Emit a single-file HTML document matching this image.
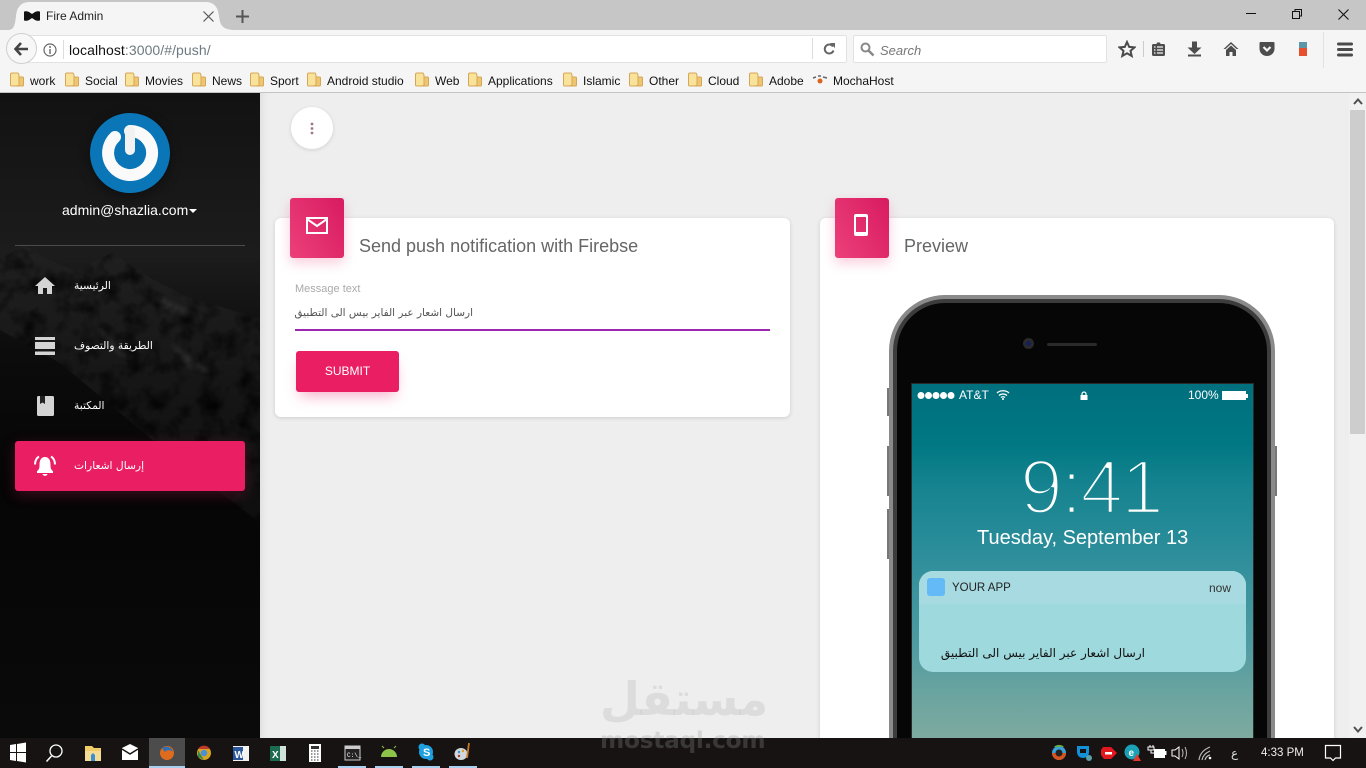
<!DOCTYPE html>
<html><head><meta charset="utf-8"><title>Fire Admin</title>
<style>
html,body{margin:0;padding:0;width:1366px;height:768px;overflow:hidden;background:#eee;font-family:"Liberation Sans","DejaVu Sans",sans-serif}
.a{position:absolute}
.t{position:absolute;white-space:nowrap}
.bm{position:absolute;top:74px;font-size:12px;line-height:14px;color:#111;white-space:nowrap}
.f{position:absolute;top:72px;width:14px;height:15px}
.nav{position:absolute;left:74px;color:#fff;font:10.7px "DejaVu Sans",sans-serif;white-space:nowrap;direction:rtl}
</style></head>
<body>
<svg width="0" height="0" style="position:absolute"><defs>
<g id="fold"><path d="M.5 2.500Q.5 1 2 1H8L9 3V14H2Q.5 14 .5 13Z" fill="#f9e39a" stroke="#d6a658"/><path d="M9 5H12.500Q13.500 5 13.500 6V13Q13.500 14 12.500 14H5Q8.500 14 9 13Z" fill="#eec66f" stroke="#d6a658"/></g>
</defs></svg>

<!-- browser chrome -->
<div class="a" style="left:0;top:0;width:1366px;height:30px;background:#c6c6c6"></div>
<svg class="a" style="left:0;top:0" width="240" height="31"><path d="M8 30C14 30 15 25 16 16C17 7 21 2 30 2H205C214 2 218 7 219 16C220 25 222 30 236 30Z" fill="#f5f5f5"/></svg>
<svg class="a" style="left:24px;top:11px" width="16" height="10"><path d="M0 1C0 0 3 0 5 1L8 3L11 1C13 0 16 0 16 1V9C16 10 13 10 11 9L8 7L5 9C3 10 0 10 0 9Z" fill="#111"/></svg>
<div class="t" style="left:46px;top:9px;font-size:12px;line-height:14px;color:#222">Fire Admin</div>
<svg class="a" style="left:203px;top:11px" width="11" height="11"><path d="M.5.5L10.500 10.500M10.500.5L.5 10.500" stroke="#555" stroke-width="1.200"/></svg>
<svg class="a" style="left:236px;top:10px" width="13" height="13"><path d="M6.500 0V13M0 6.500H13" stroke="#555" stroke-width="2"/></svg>
<svg class="a" style="left:1246px;top:8px" width="110" height="14"><path d="M0 5.500H10" stroke="#111" stroke-width="1"/><path d="M46.500 3.500H53.500V10.500H46.500ZM49 3.500V1.500H55.500V8H53.500" fill="none" stroke="#111"/><path d="M92.500 1.500L102.500 11.500M102.500 1.500L92.500 11.500" stroke="#111" stroke-width="1.100"/></svg>

<div class="a" style="left:0;top:30px;width:1366px;height:63px;background:#f5f5f5"></div>
<div class="a" style="left:0;top:92px;width:1366px;height:1px;background:#c4c4c4"></div>
<div class="a" style="left:20px;top:35px;width:825px;height:26px;background:#fff;border:1px solid #e2e2e2;border-radius:2px"></div>
<div class="a" style="left:6px;top:33px;width:29px;height:29px;background:#f7f7f7;border:1px solid #cfcfcf;border-radius:50%"></div>
<svg class="a" style="left:14px;top:42px" width="15" height="14"><path d="M7 1L1.500 7L7 13M2 7H14" fill="none" stroke="#444" stroke-width="2.600"/></svg>
<svg class="a" style="left:43px;top:43px" width="14" height="14"><circle cx="7" cy="7" r="6" fill="none" stroke="#666" stroke-width="1.200"/><path d="M7 6V11M7 3V5" stroke="#666" stroke-width="1.400"/></svg>
<div class="a" style="left:63px;top:40px;width:1px;height:19px;background:#ddd"></div>
<div class="t" style="left:69px;top:42px;font-size:14px;line-height:16px;color:#111;letter-spacing:.07px">localhost<span style="color:#6d7a80">:3000/#/push/</span></div>
<div class="a" style="left:812px;top:38px;width:1px;height:21px;background:#ddd"></div>
<svg class="a" style="left:823px;top:43px" width="12" height="12"><path d="M10 3.500A4.500 4.500 0 1 0 10.500 7.500" fill="none" stroke="#666" stroke-width="2"/><path d="M7 0L12 0V5Z" fill="#666"/></svg>
<div class="a" style="left:853px;top:35px;width:252px;height:26px;background:#fff;border:1px solid #e2e2e2;border-radius:2px"></div>
<svg class="a" style="left:860px;top:42px" width="15" height="15"><circle cx="5.500" cy="5.500" r="4" fill="none" stroke="#888" stroke-width="2"/><path d="M8.500 8.500L13.500 13.500" stroke="#888" stroke-width="2.400"/></svg>
<div class="t" style="left:880px;top:43px;font-size:13px;line-height:15px;font-style:italic;color:#777">Search</div>
<svg class="a" style="left:1118px;top:40px" width="18" height="18"><path d="M9 2L11.200 6.900L16.500 7.400L12.500 10.900L13.700 16L9 13.300L4.300 16L5.500 10.900L1.500 7.400L6.800 6.900Z" fill="none" stroke="#4a4a4a" stroke-width="2"/></svg>
<div class="a" style="left:1143px;top:41px;width:1px;height:16px;background:#ccc"></div>
<svg class="a" style="left:1151px;top:41px" width="16" height="16"><path d="M1 4.500Q1 3 2.500 3H5.500L6 1.500H9L9.500 3H12.500Q14 3 14 4.500V13.500Q14 15 12.500 15H2.500Q1 15 1 13.500Z" fill="#4d4d4d"/><path d="M3 6H4.500M6 6H12M3 9H4.500M6 9H12M3 12H4.500M6 12H12" stroke="#f5f5f5" stroke-width="1.300"/></svg>
<svg class="a" style="left:1187px;top:41px" width="16" height="16"><path d="M5 .5H10V6.500H14.500L7.500 13L.5 6.500H5ZM1 13.500H14V15.500H1Z" fill="#4d4d4d"/></svg>
<svg class="a" style="left:1223px;top:41px" width="16" height="16"><path d="M8 1L.5 8H2.500L8 3L13.500 8H15.500ZM3 9L8 4.500L13 9V15H9.500V11H6.500V15H3Z" fill="#4d4d4d"/></svg>
<svg class="a" style="left:1259px;top:41px" width="16" height="16"><path d="M1.500 1H14.500Q15.500 1 15.500 2V7.500C15.500 12 12 15 8 15C4 15 .5 12 .5 7.500V2Q.5 1 1.500 1Z" fill="#4d4d4d"/><path d="M4.500 6L8 9.500L11.500 6" fill="none" stroke="#f5f5f5" stroke-width="2.200"/></svg>
<div class="a" style="left:1299px;top:42px;width:8px;height:6px;background:#5a98a8"></div>
<div class="a" style="left:1299px;top:48px;width:8px;height:8px;background:#e5502e"></div>
<div class="a" style="left:1323px;top:32px;width:1px;height:36px;background:#e2e2e2"></div>
<svg class="a" style="left:1337px;top:42px" width="16" height="15"><path d="M1.500 2H14.500M1.500 7.500H14.500M1.500 13H14.500" stroke="#4a4a4a" stroke-width="3" stroke-linecap="round"/></svg>

<!-- bookmarks -->
<svg class="f" style="left:10px"><use href="#fold"/></svg><div class="bm" style="left:30px">work</div>
<svg class="f" style="left:65px"><use href="#fold"/></svg><div class="bm" style="left:85px">Social</div>
<svg class="f" style="left:125px"><use href="#fold"/></svg><div class="bm" style="left:145px">Movies</div>
<svg class="f" style="left:192px"><use href="#fold"/></svg><div class="bm" style="left:212px">News</div>
<svg class="f" style="left:250px"><use href="#fold"/></svg><div class="bm" style="left:270px">Sport</div>
<svg class="f" style="left:307px"><use href="#fold"/></svg><div class="bm" style="left:327px">Android studio</div>
<svg class="f" style="left:415px"><use href="#fold"/></svg><div class="bm" style="left:435px">Web</div>
<svg class="f" style="left:468px"><use href="#fold"/></svg><div class="bm" style="left:488px">Applications</div>
<svg class="f" style="left:563px"><use href="#fold"/></svg><div class="bm" style="left:583px">Islamic</div>
<svg class="f" style="left:629px"><use href="#fold"/></svg><div class="bm" style="left:649px">Other</div>
<svg class="f" style="left:688px"><use href="#fold"/></svg><div class="bm" style="left:708px">Cloud</div>
<svg class="f" style="left:749px"><use href="#fold"/></svg><div class="bm" style="left:769px">Adobe</div>
<svg class="a" style="left:812px;top:75px" width="16" height="10"><path d="M1 3L4 2M6 1H9M11 2L15 3" stroke="#666" stroke-width="1.500"/><circle cx="8" cy="6" r="2.500" fill="#d8641e"/></svg>
<div class="bm" style="left:833px">MochaHost</div>

<!-- page -->
<div class="a" style="left:260px;top:93px;width:1089px;height:645px;background:#eeeeee;box-shadow:inset 8px 0 8px -6px rgba(0,0,0,.08)"></div>
<div class="a" style="left:1349px;top:93px;width:17px;height:645px;background:#f1f1f1"></div>
<div class="a" style="left:1350px;top:110px;width:15px;height:324px;background:#cdcdcd"></div>
<svg class="a" style="left:1353px;top:98px" width="10" height="8"><path d="M1 6L5 1.500L9 6" fill="none" stroke="#505050" stroke-width="2"/></svg>
<svg class="a" style="left:1353px;top:725px" width="10" height="8"><path d="M1 2L5 6.500L9 2" fill="none" stroke="#505050" stroke-width="2"/></svg>

<!-- sidebar -->
<svg class="a" style="left:0;top:93px" width="260" height="645" viewBox="0 0 260 645">
<defs><linearGradient id="sb" x1="0" y1="0" x2="0" y2="1"><stop offset="0" stop-color="#121212"/><stop offset=".25" stop-color="#1c1c1c"/><stop offset=".4" stop-color="#0c0c0c"/><stop offset=".6" stop-color="#050505"/><stop offset="1" stop-color="#0a0a0a"/></linearGradient>
<linearGradient id="mt" x1="0" y1="0" x2="0" y2="1"><stop offset="0" stop-color="#202020"/><stop offset=".5" stop-color="#161616"/><stop offset="1" stop-color="#0e0e0e"/></linearGradient>
<filter id="bl"><feGaussianBlur stdDeviation="2.500"/></filter>
<filter id="nz" x="0" y="0" width="100%" height="100%"><feTurbulence type="fractalNoise" baseFrequency=".05" numOctaves="3" seed="4"/><feColorMatrix values="0 0 0 0 0 0 0 0 0 0 0 0 0 0 0 0 0 0 1.800 -.75"/><feComposite in2="SourceAlpha" operator="in"/></filter></defs>
<rect width="260" height="645" fill="url(#sb)"/>
<path d="M0 166L25 152L45 165L75 178L112 160L150 185L190 205L260 225V430L150 345L60 270L0 237Z" fill="url(#mt)"/>
<g filter="url(#bl)"><path d="M150 200L205 225L190 222L160 215ZM97 235L115 245L133 265L120 262ZM170 250L215 280L190 275Z" fill="#2e2e2e"/></g>
<path d="M0 166L25 152L45 165L75 178L112 160L150 185L190 205L260 225V430L150 345L60 270L0 237Z" fill="#000" filter="url(#nz)"/>
<rect x="15" y="152" width="230" height="1" fill="#4b4b4b"/>
</svg>

<!-- avatar -->
<div class="a" style="left:90px;top:113px;width:80px;height:80px;border-radius:50%;background:#0a76b8;box-shadow:0 4px 12px rgba(0,0,0,.4)"></div>
<svg class="a" style="left:90px;top:113px" width="80" height="80"><path d="M25 24A22 22 0 1 0 40 18" fill="none" stroke="#fafafa" stroke-width="12" stroke-linecap="round"/><path d="M40 17V37" stroke="#f2f2f2" stroke-width="10" stroke-linecap="round"/></svg>
<div class="t" style="left:62px;top:202px;font-size:14px;line-height:16px;color:#fff">admin@shazlia.com</div>
<svg class="a" style="left:189px;top:209px" width="8" height="4"><path d="M0 0H8L4 4Z" fill="#fff"/></svg>

<!-- nav -->
<svg class="a" style="left:35px;top:277px" width="20" height="17"><path d="M10 0L20 9H17V17H12V11H8V17H3V9H0Z" fill="#d4d4d4"/></svg>
<div class="nav" style="top:279px">الرئيسية</div>
<svg class="a" style="left:35px;top:337px" width="20" height="18"><path d="M0 0H20V3H0ZM0 5H20V12H0ZM0 14.500H20V18H0Z" fill="#d4d4d4"/></svg>
<div class="nav" style="top:339px">الطريقة والتصوف</div>
<svg class="a" style="left:37px;top:396px" width="17" height="20"><path d="M1.500 0H15.500Q17 0 17 1.500V18.500Q17 20 15.500 20H1.500Q0 20 0 18.500V1.500Q0 0 1.500 0Z" fill="#d4d4d4"/><path d="M3 0H8V8L5.500 6.500L3 8Z" fill="#222"/></svg>
<div class="nav" style="top:399px">المكتبة</div>
<div class="a" style="left:15px;top:441px;width:230px;height:50px;background:#e91e63;border-radius:3px;box-shadow:0 4px 14px rgba(233,30,99,.25)"></div>
<svg class="a" style="left:34px;top:455px" width="22" height="22"><path d="M11 2C7 2 5.500 5.500 5.500 9.500C5.500 13 5 15 3 16V18H19V16C17 15 16.500 13 16.500 9.500C16.500 5.500 15 2 11 2ZM8.500 19H13.500C13 21.500 9 21.500 8.500 19Z" fill="#fff"/><path d="M1 9.500C1 6 2.500 3 5 1.500M21 9.500C21 6 19.500 3 17 1.500" fill="none" stroke="#fff" stroke-width="2"/></svg>
<div class="nav" style="top:459px">إرسال اشعارات</div>

<!-- more button -->
<div class="a" style="left:291px;top:107px;width:42px;height:42px;border-radius:50%;background:#fff;box-shadow:0 1px 4px rgba(0,0,0,.12)"></div>
<svg class="a" style="left:309px;top:122px" width="6" height="13"><circle cx="3" cy="2" r="1.400" fill="#a0788a"/><circle cx="3" cy="6.500" r="1.400" fill="#a0788a"/><circle cx="3" cy="11" r="1.400" fill="#a0788a"/></svg>

<!-- card 1 -->
<div class="a" style="left:275px;top:218px;width:515px;height:199px;background:#fff;border-radius:6px;box-shadow:0 1px 4px rgba(0,0,0,.14)"></div>
<div class="a" style="left:290px;top:198px;width:54px;height:60px;border-radius:3px;background:linear-gradient(60deg,#ec407a,#d81b60);box-shadow:0 5px 12px rgba(233,30,99,.22)"></div>
<svg class="a" style="left:306px;top:217px" width="22" height="17"><path d="M1 1H21V16H1Z" fill="none" stroke="#fff" stroke-width="2"/><path d="M1 2L11 9L21 2" fill="none" stroke="#fff" stroke-width="2"/></svg>
<div class="t" style="left:359px;top:236px;font-size:18px;line-height:20px;color:#666">Send push notification with Firebse</div>
<div class="t" style="left:295px;top:283px;font-size:11px;line-height:13px;color:#aaa">Message text</div>
<div class="t" style="left:295px;top:306px;width:178px;font:10.5px/15px 'DejaVu Sans',sans-serif;color:#555;direction:rtl;text-align:right">ارسال اشعار عبر الفاير بيس الى التطبيق</div>
<div class="a" style="left:295px;top:329px;width:475px;height:2px;background:#9c27b0"></div>
<div class="a" style="left:296px;top:351px;width:103px;height:41px;background:#e91e63;border-radius:3px;box-shadow:0 8px 14px -4px rgba(233,30,99,.35);color:#fff;font-size:12px;line-height:41px;text-align:center">SUBMIT</div>

<!-- card 2 -->
<div class="a" style="left:820px;top:218px;width:514px;height:530px;background:#fff;border-radius:6px 6px 0 0;box-shadow:0 1px 4px rgba(0,0,0,.14)"></div>
<div class="a" style="left:835px;top:198px;width:54px;height:60px;border-radius:3px;background:linear-gradient(60deg,#ec407a,#d81b60);box-shadow:0 5px 12px rgba(233,30,99,.22)"></div>
<div class="a" style="left:854px;top:214px;width:10px;height:15px;border:2px solid #fff;border-top-width:3px;border-bottom-width:4px;border-radius:2px"></div>
<div class="t" style="left:904px;top:236px;font-size:18px;line-height:20px;color:#666">Preview</div>

<!-- phone -->
<div class="a" style="left:887px;top:388px;width:3px;height:28px;background:#777"></div>
<div class="a" style="left:887px;top:446px;width:3px;height:50px;background:#777"></div>
<div class="a" style="left:887px;top:509px;width:3px;height:50px;background:#777"></div>
<div class="a" style="left:1274px;top:446px;width:3px;height:50px;background:#777"></div>
<div class="a" style="left:889px;top:295px;width:386px;height:460px;border-radius:56px 56px 0 0;background:#8a8a8a"></div>
<div class="a" style="left:893px;top:299px;width:378px;height:450px;border-radius:52px 52px 0 0;background:#3c3c3c"></div>
<div class="a" style="left:897px;top:303px;width:370px;height:440px;border-radius:48px 48px 0 0;background:#060606"></div>
<div class="a" style="left:1023px;top:338px;width:11px;height:11px;border-radius:50%;background:#2a2a2a"></div>
<div class="a" style="left:1026px;top:341px;width:5px;height:5px;border-radius:50%;background:#14205a"></div>
<div class="a" style="left:1047px;top:343px;width:50px;height:3px;border-radius:2px;background:#2a2a2a"></div>
<div class="a" style="left:912px;top:384px;width:341px;height:360px;background:linear-gradient(#006f7e 0,#007883 60px,#15838f 100px,#2b8d9a 165px,#4f9ba1 260px,#6aa4a0 310px,#80ab9e 360px);box-shadow:0 0 0 1px #2a2a2a"></div>

<!-- lock screen -->
<svg class="a" style="left:917px;top:391px" width="38" height="9"><circle cx="4" cy="4.500" r="3.500" fill="#fff"/><circle cx="11.500" cy="4.500" r="3.500" fill="#fff"/><circle cx="19" cy="4.500" r="3.500" fill="#fff"/><circle cx="26.500" cy="4.500" r="3.500" fill="#fff"/><circle cx="34" cy="4.500" r="3.500" fill="#fff"/></svg>
<div class="t" style="left:959px;top:388px;font-size:12px;line-height:15px;color:#fff">AT&amp;T</div>
<svg class="a" style="left:996px;top:389px" width="14" height="11"><path d="M1 4C4 1 10 1 13 4M3 6.500C5 4.500 9 4.500 11 6.500M5 8.500C6 7.500 8 7.500 9 8.500" fill="none" stroke="#fff" stroke-width="1.300"/><circle cx="7" cy="10" r="1" fill="#fff"/></svg>
<svg class="a" style="left:1080px;top:391px" width="8" height="10"><path d="M2 4V3A2 2 0 0 1 6 3V4" fill="none" stroke="#fff" stroke-width="1.200"/><rect x="0.500" y="4" width="7" height="5" fill="#fff"/></svg>
<div class="t" style="left:1188px;top:388px;font-size:12px;line-height:15px;color:#fff">100%</div>
<div class="a" style="left:1222px;top:391px;width:24px;height:9px;background:#fff"></div>
<div class="a" style="left:1246px;top:394px;width:2px;height:4px;background:#fff"></div>
<svg class="a" style="left:1010px;top:445px" width="150" height="80"><defs><linearGradient id="sc" gradientUnits="userSpaceOnUse" x1="0" y1="-1" x2="0" y2="104"><stop offset="0" stop-color="#007883"/><stop offset=".38" stop-color="#15838f"/><stop offset="1" stop-color="#2b8d9a"/></linearGradient></defs><text x="10" y="68.500" font-family="Liberation Sans" font-size="77" fill="#fff" stroke="url(#sc)" stroke-width="3.500" letter-spacing="-2">9:41</text></svg>
<div class="t" style="left:977px;top:526px;font-size:20px;line-height:24px;color:#fff">Tuesday, September 13</div>
<div class="a" style="left:919px;top:571px;width:327px;height:101px;border-radius:14px;background:#9ed9dd;overflow:hidden"><div style="height:33px;background:#a8dbe1"></div></div>
<div class="a" style="left:927px;top:578px;width:18px;height:18px;border-radius:3px;background:#64b9f7"></div>
<div class="t" style="left:952px;top:581px;font-size:11.500px;line-height:15px;color:#222">YOUR APP</div>
<div class="t" style="left:1209px;top:581px;font-size:12px;line-height:15px;color:#333">now</div>
<div class="t" style="left:940px;top:644px;width:205px;font:12px/18px 'DejaVu Sans',sans-serif;color:#111;direction:rtl;text-align:right">ارسال اشعار عبر الفاير بيس الى التطبيق</div>

<!-- taskbar -->
<div class="a" style="left:0;top:738px;width:1366px;height:30px;background:#171313"></div>
<div class="a" style="left:149px;top:738px;width:36px;height:30px;background:#4c4c4c"></div>
<div class="a" style="left:149px;top:766px;width:36px;height:2px;background:#a8d0f0"></div>
<div class="a" style="left:338px;top:766px;width:28px;height:2px;background:#a8d0f0"></div>
<div class="a" style="left:375px;top:766px;width:28px;height:2px;background:#a8d0f0"></div>
<div class="a" style="left:412px;top:766px;width:28px;height:2px;background:#a8d0f0"></div>
<div class="a" style="left:449px;top:766px;width:28px;height:2px;background:#a8d0f0"></div>
<svg class="a" style="left:0;top:738px" width="490" height="30">
<path d="M10 7L16 6V14H10ZM17 6L26 4.500V14H17ZM10 15H16V23L10 22ZM17 15H26V24.500L17 23Z" fill="#fff"/>
<circle cx="56" cy="13" r="6" fill="none" stroke="#fff" stroke-width="1.300"/><path d="M51.500 18L46.500 23.500" stroke="#fff" stroke-width="1.500"/>
<path d="M85 8H92L94 10H101V23H85Z" fill="#f1cd6a"/><rect x="85" y="13" width="16" height="10" fill="#f5dc94"/><path d="M91 23V17L93 15L95 17V23Z" fill="#3a8fd0"/>
<path d="M122 10L130 6L138 10V22H122Z" fill="#fff"/><path d="M122 11L130 16L138 11" fill="none" stroke="#171313" stroke-width="1.500"/>
<circle cx="167" cy="15" r="7" fill="#df6b1c"/><path d="M162 10C166 7 172 9 173 14C170 11 166 12 165 14Z" fill="#2f6fb5"/>
<circle cx="204" cy="15" r="7" fill="#d9a520"/><path d="M198 11A7 7 0 0 1 210 11H204Z" fill="#c0392b"/><path d="M198 12L204 22L198 19Z" fill="#3a8a4a"/><circle cx="204" cy="15" r="3.200" fill="#4a90d9"/>
<rect x="233" y="8" width="16" height="15" fill="#f2f2f2"/><rect x="233" y="9" width="10" height="13" fill="#2b579a"/><text x="234.500" y="20" font-size="10" font-weight="bold" fill="#fff" font-family="Liberation Sans">W</text>
<rect x="270" y="8" width="16" height="15" fill="#cfe3d8"/><rect x="270" y="8" width="10" height="15" fill="#1a6b50"/><text x="272" y="20" font-size="10" font-weight="bold" fill="#fff" font-family="Liberation Sans">X</text>
<rect x="309" y="6" width="12" height="18" fill="#fff"/><rect x="311" y="8" width="8" height="3" fill="#333"/><path d="M311 13H319M311 16H319M311 19H319M311 22H319" stroke="#333" stroke-dasharray="1.500 1.500"/>
<rect x="345" y="8" width="15" height="14" fill="#222" stroke="#ccc"/><rect x="345" y="8" width="15" height="3" fill="#ccc"/><text x="347" y="19" font-size="6" fill="#fff" font-family="Liberation Mono">C:\_</text>
<path d="M381 19A8 8 0 0 1 397 19Z" fill="#8fc44a"/><path d="M384 10L382 8M394 10L396 8" stroke="#8fc44a"/>
<circle cx="426" cy="14" r="7" fill="#1ea0e0"/><circle cx="422" cy="9" r="3.500" fill="#1ea0e0"/><circle cx="430" cy="19" r="3.500" fill="#1ea0e0"/><text x="423" y="18" font-size="11" font-weight="bold" fill="#fff" font-family="Liberation Sans">S</text>
<ellipse cx="461" cy="16" rx="6.500" ry="6" fill="#cfd8dc"/><circle cx="459" cy="14" r="1.200" fill="#3a8fd0"/><circle cx="463" cy="13" r="1.200" fill="#e0a020"/><circle cx="459" cy="18" r="1.200" fill="#b03030"/><path d="M469 5L467 20" stroke="#c8782a" stroke-width="1.800"/>
</svg>
<svg class="a" style="left:1050px;top:738px" width="316" height="30">
<circle cx="9" cy="15" r="7" fill="#3ba0d8"/><path d="M2 15A7 7 0 0 0 16 15Z" fill="#d8541e"/><circle cx="9" cy="15" r="3.500" fill="#222"/><path d="M4 9A7 7 0 0 1 14 9Z" fill="#63b04a"/>
<path d="M27 8H39V14C39 18 36 20 33 20C30 20 27 18 27 14Z" fill="#1290d8"/><path d="M30 11H36V15H30Z" fill="#171313"/><circle cx="39" cy="20" r="3" fill="#5ba0a8"/>
<path d="M53 9H61L67 15L61 21H54L51 17V12Z" fill="#e3181f"/><rect x="55" y="14" width="7" height="2.500" fill="#fff"/>
<circle cx="82" cy="14" r="7.500" fill="#1aa1b5"/><text x="78.500" y="18" font-size="10" font-weight="bold" fill="#fff" font-family="Liberation Sans">e</text><path d="M83 23L87 16L91 23Z" fill="#e03a2e"/>
<rect x="104" y="11" width="11" height="9" fill="#fff"/><path d="M100 9V7M103 9V7M98 9H104V12H98ZM101 12V15H104" fill="none" stroke="#fff"/><rect x="115" y="13" width="1.500" height="4" fill="#fff"/>
<path d="M122 12H125L129 9V21L125 18H122Z" fill="none" stroke="#fff"/><path d="M132 11Q134 15 132 19M135 9Q138 15 135 21" fill="none" stroke="#bbb"/>
<path d="M149 22Q150 13 160 9M152 22Q153 16 160 13M155 22Q156 18 160 17" fill="none" stroke="#bbb" stroke-width="1.200"/><circle cx="160" cy="20" r="1.300" fill="#fff"/>
<path d="M275.500 7.500H290.500V20H285.500L283 22.500L280.500 20H275.500Z" fill="none" stroke="#fff" stroke-width="1.200"/>
</svg>
<div class="t" style="left:1231px;top:746px;font-size:12px;line-height:14px;color:#ddd;font-family:'DejaVu Sans',sans-serif">ع</div>
<div class="t" style="left:1261px;top:746px;font-size:11.500px;line-height:15px;color:#eee">4:33 PM</div>

<!-- watermark -->
<div class="t" style="left:600px;top:664px;width:166px;text-align:center;font:bold 46px/70px 'DejaVu Sans',sans-serif;color:rgba(150,150,150,.2)">مستقل</div>
<div class="t" style="left:600px;top:726px;font:bold 23.300px/30px 'DejaVu Sans',sans-serif;color:rgba(150,150,150,.28);letter-spacing:-.3px">mostaql.com</div>
</body></html>
